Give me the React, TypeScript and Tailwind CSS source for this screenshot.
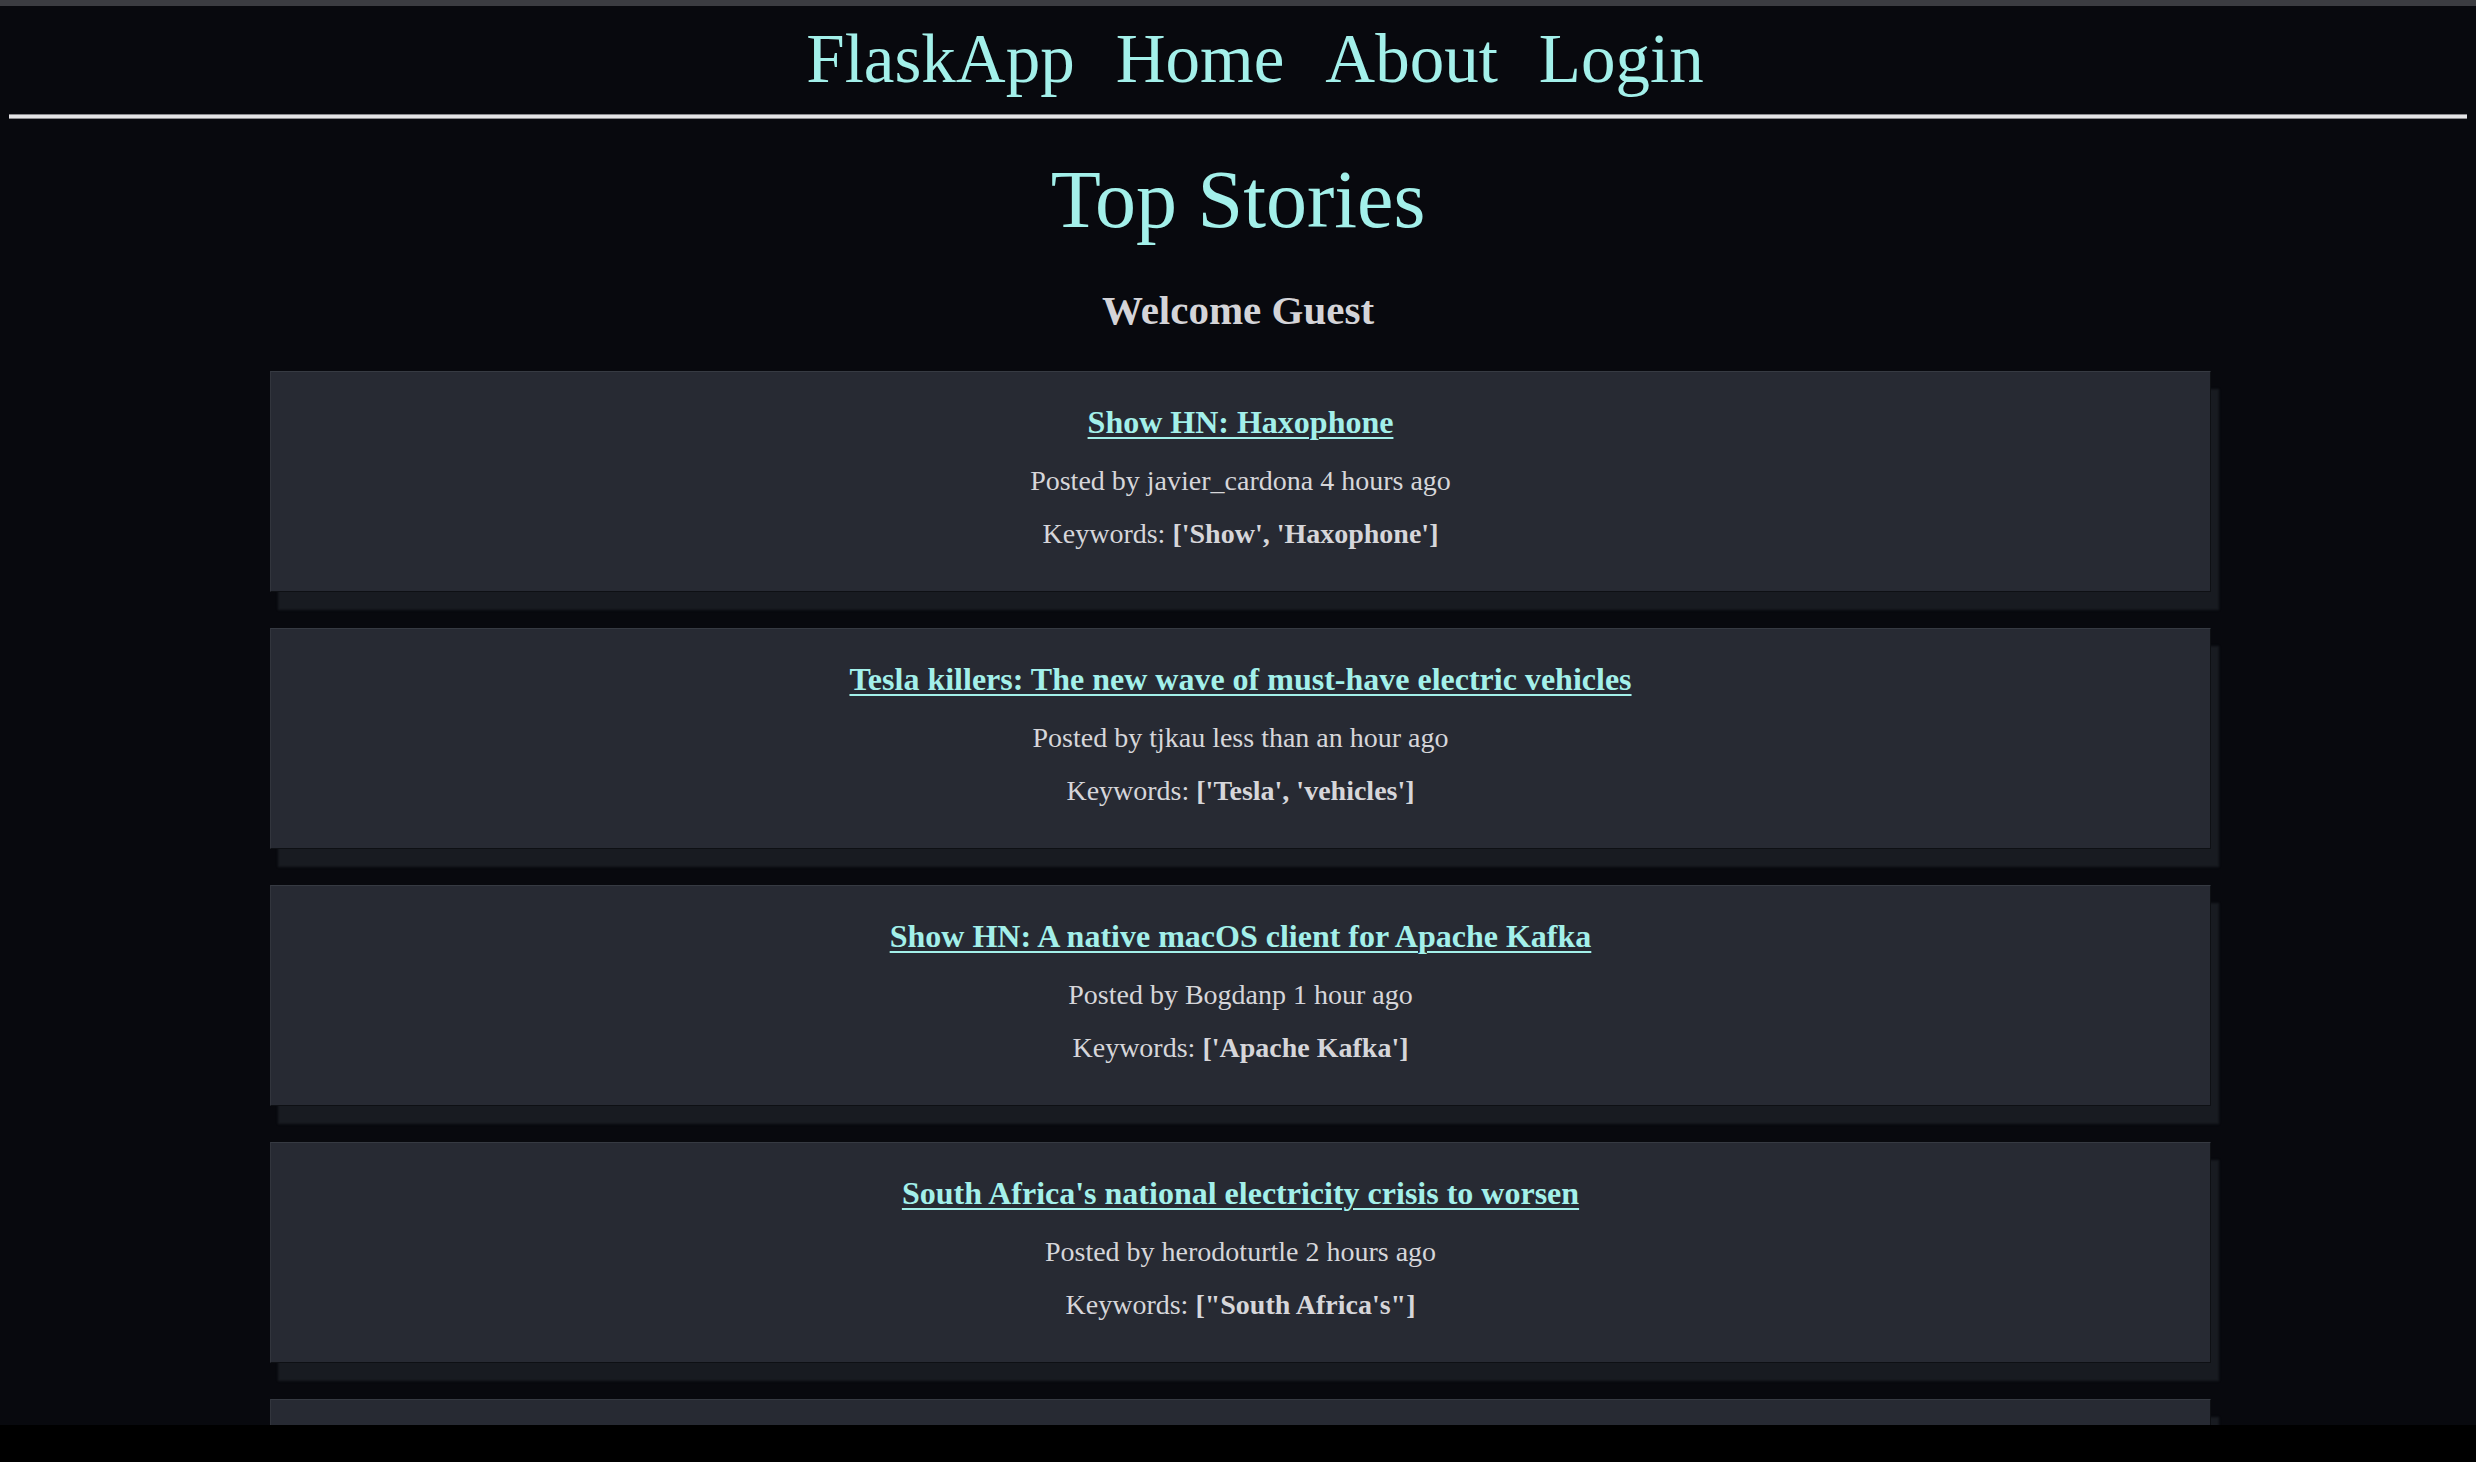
type Story = {
  title: string
  author: string
  ago: string
  keywords: string
}

const stories: Story[] = [
  {
    title: 'Show HN: Haxophone',
    author: 'javier_cardona',
    ago: '4 hours ago',
    keywords: "['Show', 'Haxophone']",
  },
  {
    title: 'Tesla killers: The new wave of must-have electric vehicles',
    author: 'tjkau',
    ago: 'less than an hour ago',
    keywords: "['Tesla', 'vehicles']",
  },
  {
    title: 'Show HN: A native macOS client for Apache Kafka',
    author: 'Bogdanp',
    ago: '1 hour ago',
    keywords: "['Apache Kafka']",
  },
  {
    title: "South Africa's national electricity crisis to worsen",
    author: 'herodoturtle',
    ago: '2 hours ago',
    keywords: '["South Africa\'s"]',
  },
]

const cardClass =
  'w-[1941px] ml-[270px] bg-[#272a33] border border-t-[#363a42] border-l-[#32353d] border-b-[#0e1014] border-r-[#0e1014] shadow-[8px_18px_2px_#181b21] shrink-0'

function StoryCard({ story }: { story: Story }) {
  return (
    <div className={`${cardClass} flex flex-col items-center pt-[30px] pb-[41px]`}>
      <a
        href="#"
        className="text-[32px] leading-[40px] font-bold text-[#a3f0ea] underline underline-offset-[4px] decoration-[2px]"
      >
        {story.title}
      </a>
      <p className="mt-[23px] text-[28px] leading-[32px] text-[#d6d6da]">
        Posted by {story.author} {story.ago}
      </p>
      <p className="mt-[21px] text-[28px] leading-[32px] text-[#d6d6da]">
        Keywords: <strong className="font-bold">{story.keywords}</strong>
      </p>
    </div>
  )
}

export default function App() {
  return (
    <div
      className="w-[2476px] h-[1462px] overflow-hidden flex flex-col bg-black"
      style={{ fontFamily: '"Liberation Serif", "Times New Roman", serif' }}
    >
      <div className="h-[1425px] overflow-hidden bg-[#08090e] flex flex-col">
        {/* browser chrome strip */}
        <div className="h-[6px] bg-[#3b3c41] shrink-0" />

        {/* nav */}
        <nav className="pt-[13px] flex justify-center gap-[41px] pl-[34px] text-[69px] leading-[80px] text-[#a3f0ea]">
          <a href="#">FlaskApp</a>
          <a href="#">Home</a>
          <a href="#">About</a>
          <a href="#">Login</a>
        </nav>
        <div className="mt-[15px] mx-[9px] h-[3px] bg-[#e4e4e6] border-y border-[#8a8a8e] box-content shrink-0" />

        <h1 className="mt-[40px] text-center text-[82px] leading-[82px] text-[#a3f0ea]">Top Stories</h1>
        <h2 className="mt-[45px] text-center text-[41px] leading-[48px] font-bold text-[#d4d4d8]">
          Welcome Guest
        </h2>

        <div className="mt-[37px] flex flex-col gap-[36px]">
          {stories.map((s) => (
            <StoryCard key={s.title} story={s} />
          ))}
          {/* next card, scrolled below the fold */}
          <div className={`${cardClass} h-[221px]`} />
        </div>
      </div>
    </div>
  )
}
